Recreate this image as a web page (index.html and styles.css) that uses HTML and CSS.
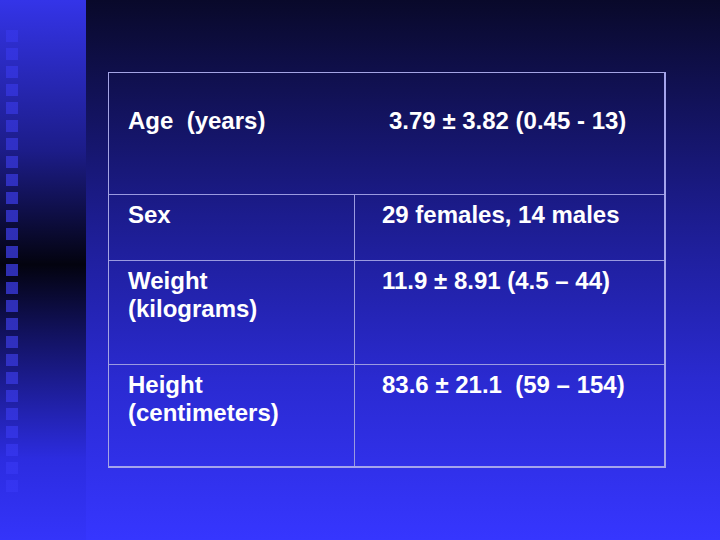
FILE: index.html
```html
<!DOCTYPE html>
<html>
<head>
<meta charset="utf-8">
<link rel="stylesheet" href="styles.css">
</head>
<body>
<div class="slide">
  <div class="strip">
    <div class="squares">
      <span></span><span></span><span></span><span></span><span></span><span></span>
      <span></span><span></span><span></span><span></span><span></span><span></span>
      <span></span><span></span><span></span><span></span><span></span><span></span>
      <span></span><span></span><span></span><span></span><span></span><span></span>
      <span></span><span></span>
    </div>
  </div>
  <div class="main">
    <div class="table">
      <div class="cell r1 c1">Age&nbsp; (years)</div>
      <div class="cell r1 c2 age-val">3.79 ± 3.82 (0.45 - 13)</div>
      <div class="cell c1 div">Sex</div>
      <div class="cell c2">29 females, 14 males</div>
      <div class="cell c1 div">Weight<br>(kilograms)</div>
      <div class="cell c2">11.9 ± 8.91 (4.5 – 44)</div>
      <div class="cell c1 div last">Height<br>(centimeters)</div>
      <div class="cell c2 last">83.6 ± 21.1&nbsp; (59 – 154)</div>
    </div>
  </div>
</div>
</body>
</html>
```

FILE: styles.css
```css
html, body {
  margin: 0;
  padding: 0;
}
body {
  width: 720px;
  height: 540px;
  overflow: hidden;
  font-family: "Liberation Sans", Arial, sans-serif;
}
.slide {
  display: flex;
  width: 720px;
  height: 540px;
}
.strip {
  width: 86px;
  height: 540px;
  flex: none;
  background: linear-gradient(to bottom, #3434e8 0%, #1c1c88 28%, #03030f 49%, #121260 62%, #2c2ce0 85%, #3434fa 100%);
}
.squares {
  display: flex;
  flex-direction: column;
  gap: 6px;
  padding-top: 30px;
  padding-left: 6px;
}
.squares span {
  display: block;
  width: 12px;
  height: 12px;
  background: linear-gradient(to bottom, #3636ec 0%, #3030c8 25%, #2e2eb0 49%, #3030c0 65%, #3434ec 85%, #3636fa 100%) fixed;
}
.main {
  flex: 1;
  height: 540px;
  background: linear-gradient(to bottom, #09092a 0%, #1c1c8e 40%, #2a2ad0 70%, #3636ff 100%);
  padding: 72px 0 0 22px;
  box-sizing: border-box;
}
.table {
  width: 558px;
  box-sizing: border-box;
  border-top: 1px solid #a4a4e4;
  border-left: 1px solid #a4a4e4;
  border-right: 2px solid #a4a4ec;
  border-bottom: 2px solid #a4a4ec;
  display: grid;
  grid-template-columns: 246px 1fr;
  grid-template-rows: 122px 66px 104px 101px;
  color: #ffffff;
  font-size: 24px;
  font-weight: bold;
  line-height: 28px;
}
.cell {
  box-sizing: border-box;
  border-bottom: 1px solid #9a9ae0;
  padding-top: 6px;
}
.cell.last {
  border-bottom: none;
}
.c1 {
  padding-left: 19px;
}
.c2 {
  padding-left: 27px;
}
.div {
  border-right: 1px solid #9a9ae0;
}
.r1 {
  padding-top: 34px;
}
.age-val {
  padding-left: 34px;
}
```
